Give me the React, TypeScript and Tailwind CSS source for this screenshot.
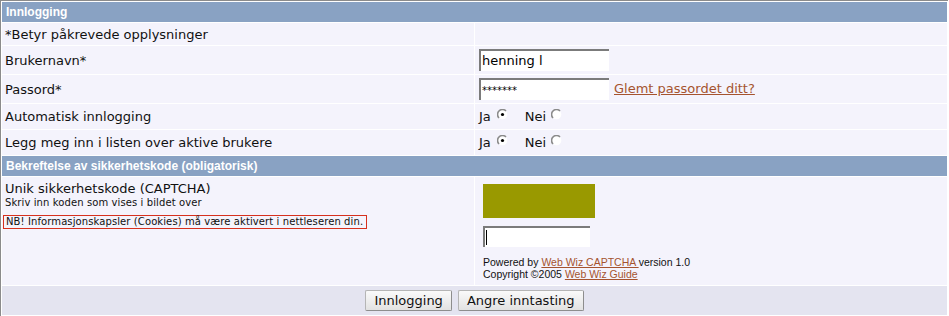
import React from 'react';

const verdana = { fontFamily: '"DejaVu Sans", Verdana, sans-serif' };

function Radio({ checked }: { checked?: boolean }) {
  return (
    <svg width="11" height="11" viewBox="0 0 11 11" className="inline-block -translate-y-[3px]">
      <circle cx="5.5" cy="5.5" r="4.8" fill="#fff" />
      <path d="M2 9 A4.5 4.5 0 0 1 9 2" fill="none" stroke="#8a8a8a" strokeWidth="1.6" />
      {checked && <circle cx="5.5" cy="5.5" r="1.6" fill="#000" />}
    </svg>
  );
}

function Row({
  h,
  left,
  right,
}: {
  h: string;
  left: React.ReactNode;
  right?: React.ReactNode;
}) {
  return (
    <div className={`grid grid-cols-2 gap-px ${h}`}>
      <div className="bg-[#f4f3fc] pl-[3px] pt-px flex items-center text-[13px] text-[#111]">{left}</div>
      <div className="bg-[#f4f3fc] pl-[4px] flex items-center text-[13px] text-[#111]">{right}</div>
    </div>
  );
}

function Header({ children }: { children: React.ReactNode }) {
  return (
    <div
      className="h-[20px] bg-[#89a2c3] pl-[4px] flex items-center text-white font-bold text-[12px]"
      style={{ fontFamily: '"Liberation Sans", Arial, sans-serif' }}
    >
      {children}
    </div>
  );
}

function RadioPair() {
  return (
    <div className="flex items-center">
      <span>Ja</span>
      <span className="ml-[6px]"><Radio checked /></span>
      <span className="ml-[17px]">Nei</span>
      <span className="ml-[5px]"><Radio /></span>
    </div>
  );
}

const btn =
  'h-[21px] px-[8px] text-[13px] text-[#111] bg-gradient-to-b from-[#fafafa] to-[#e2e2e2] border border-[#b5b5b5] border-r-[#8d8d8d] border-b-[#8d8d8d] rounded-[2px]';

export default function App() {
  return (
    <div className="w-[949px] h-[316px] bg-white overflow-hidden" style={verdana}>
      <div className="w-[948px] border-l border-t border-[#8b8b8b] p-px flex flex-col gap-px">
        <Header>Innlogging</Header>
        <Row h="h-[22px]" left="*Betyr påkrevede opplysninger" />
        <Row
          h="h-[28px]"
          left="Brukernavn*"
          right={
            <div className="w-[130px] h-[22px] bg-white border-t-2 border-l-2 border-[#7b7b7b] flex items-center pl-[1px] text-[13px] text-black">
              henning l
            </div>
          }
        />
        <Row
          h="h-[28px]"
          left="Passord*"
          right={
            <div className="flex items-center">
              <div className="w-[130px] h-[22px] bg-white border-t-2 border-l-2 border-[#7b7b7b] flex items-center pl-[1px] text-[10px] text-black">
                *******
              </div>
              <a className="ml-[5px] text-[#a5532f] underline">Glemt passordet ditt?</a>
            </div>
          }
        />
        <Row h="h-[25px]" left="Automatisk innlogging" right={<RadioPair />} />
        <Row h="h-[25px]" left="Legg meg inn i listen over aktive brukere" right={<RadioPair />} />
        <Header>Bekreftelse av sikkerhetskode (obligatorisk)</Header>
        <div className="grid grid-cols-2 gap-px h-[108px]">
          <div className="bg-[#f4f3fc] pl-[3px] pt-[4px] text-[#111]">
            <div className="text-[13px] leading-[16px]">Unik sikkerhetskode (CAPTCHA)</div>
            <div className="text-[10px] leading-[11px] tracking-[0.1px]">Skriv inn koden som vises i bildet over</div>
            <div className="-ml-[2px] inline-block border border-[#d6301e] pl-[2px] pr-[3px] text-[10px] leading-[12px] tracking-[0.1px]">
              NB! Informasjonskapsler (Cookies) må være aktivert i nettleseren din.
            </div>
          </div>
          <div className="bg-[#f4f3fc] pl-[8px] pt-[7px]">
            <div className="w-[112px] h-[34px] bg-[#999900]" />
            <div className="mt-[8px] w-[107px] h-[21px] bg-white border-t-2 border-l-2 border-[#7b7b7b] flex items-center pl-[1px]">
              <div className="w-px h-[15px] bg-black" />
            </div>
            <div
              className="mt-[9px] text-[10.5px] leading-[12px] text-[#111]"
              style={{ fontFamily: '"Liberation Sans", Arial, sans-serif' }}
            >
              <div>
                Powered by <a className="text-[#a5532f] underline">Web Wiz CAPTCHA </a>version 1.0
              </div>
              <div>
                Copyright ©2005 <a className="text-[#a5532f] underline">Web Wiz Guide</a>
              </div>
            </div>
          </div>
        </div>
        <div className="h-[29px] bg-[#e4e4f0] flex items-center justify-center gap-[6px]">
          <button className={btn}>Innlogging</button>
          <button className={btn}>Angre inntasting</button>
        </div>
      </div>
    </div>
  );
}
